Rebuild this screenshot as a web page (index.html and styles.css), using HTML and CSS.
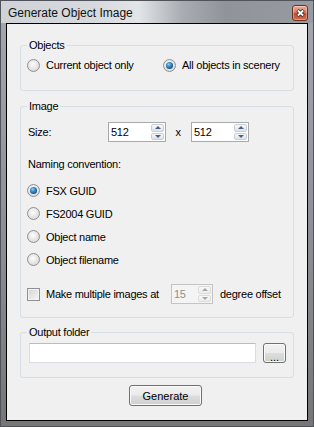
FILE: index.html
```html
<!DOCTYPE html>
<html>
<head>
    <title>Generate Object Image</title>
    <link rel="stylesheet" href="styles.css">
</head>
<body>
    <div class="window">
        <div class="titlebar">
            <span class="title">Generate Object Image</span>
            <span class="close">
                <svg width="9" height="8" viewBox="0 0 9 8">
                    <path d="M1.5 1.2 L7.5 6.8 M7.5 1.2 L1.5 6.8" stroke="#3a2520" stroke-width="3.4"/>
                    <path d="M1.8 1.5 L7.2 6.5 M7.2 1.5 L1.8 6.5" stroke="#fff" stroke-width="1.8"/>
                </svg>
            </span>
        </div>

        <div class="client">
            <fieldset class="group objects">
                <legend>Objects</legend>
                <div class="choice-row">
                    <label class="opt first"><span class="radio"></span>Current object only</label>
                    <label class="opt"><span class="radio on"></span>All objects in scenery</label>
                </div>
            </fieldset>

            <fieldset class="group image">
                <legend>Image</legend>
                <div class="size-row">
                    <span class="size-label">Size:</span>
                    <div class="spin">
                        <span class="val">512</span>
                        <span class="btns"><span class="up"></span><span class="dn"></span></span>
                    </div>
                    <span class="times">x</span>
                    <div class="spin">
                        <span class="val">512</span>
                        <span class="btns"><span class="up"></span><span class="dn"></span></span>
                    </div>
                </div>

                <div class="naming">Naming convention:</div>

                <div class="naming-list">
                    <label class="opt"><span class="radio on"></span>FSX GUID</label>
                    <label class="opt"><span class="radio"></span>FS2004 GUID</label>
                    <label class="opt"><span class="radio"></span>Object name</label>
                    <label class="opt"><span class="radio"></span>Object filename</label>
                </div>

                <div class="multi-row">
                    <span class="check"></span>
                    <span class="multi-text">Make multiple images at</span>
                    <div class="spin small disabled">
                        <span class="val">15</span>
                        <span class="btns"><span class="up"></span><span class="dn"></span></span>
                    </div>
                    <span class="multi-tail">degree offset</span>
                </div>
            </fieldset>

            <fieldset class="group output">
                <legend>Output folder</legend>
                <div class="folder-row">
                    <div class="textbox"></div>
                    <button class="btn browse">...</button>
                </div>
            </fieldset>

            <button class="btn generate">Generate</button>
        </div>
    </div>
</body>
</html>
```

FILE: styles.css
```css
html, body { margin: 0; padding: 0; }
body { font-family: "Liberation Sans", Arial, sans-serif; font-size: 11px; letter-spacing: -0.25px; color: #000; background: #fff; }

.window {
    width: 314px; height: 427px; box-sizing: border-box;
    border: 1px solid #50545a; padding: 0 5px 5px;
    display: flex; flex-direction: column;
    background:
        linear-gradient(90deg, #cfd3d8 0, #d6dade 30%, #e2e5e8 44%, #a9adb3 58%, #8f949a 72%, #979ba1 100%) top / 100% 22px no-repeat,
        linear-gradient(180deg, #a5a9af 0, #8e9298 50%, #767676 100%);
}

/* title bar */
.titlebar { height: 22px; display: flex; justify-content: space-between; align-items: flex-start; flex: none; }
.title { font-size: 12px; letter-spacing: 0; line-height: 20px; padding-top: 2px; margin-left: 2px; color: #111; }
.close {
    width: 16px; height: 16px; box-sizing: border-box; margin-top: 4px;
    border: 1px solid #6a3023; border-radius: 3px;
    background: linear-gradient(180deg, #eab09e 0, #d97a5d 45%, #c44a2c 55%, #d26d4b 100%);
    box-shadow: inset 0 0 0 1px rgba(255,255,255,0.35);
    display: flex; align-items: center; justify-content: center;
}

/* client area */
.client {
    flex: 1; background: #f0f0f0; border: 1px solid #000;
    padding: 15px 13px 0; display: flex; flex-direction: column;
}

.group { margin: 0; border: 1px solid #d5dfe5; border-radius: 3px; padding: 4px 6px 16px; min-width: 0; }
.group legend { padding: 0 2px; line-height: 13px; font-size: 11px; }
.image { margin-top: 9px; padding: 9px 6px 13px; }
.output { margin-top: 8px; padding: 4px 6px 14px; }

.opt { display: flex; align-items: center; white-space: nowrap; }
.choice-row { display: flex; height: 18px; align-items: center; }
.choice-row .first { width: 136px; }

.radio {
    width: 13px; height: 13px; box-sizing: border-box; flex: none; margin-right: 6px;
    border-radius: 50%; border: 1px solid #8e9092;
    background: radial-gradient(circle at 45% 40%, #ffffff 0, #e8e8e8 45%, #cfcfcf 100%);
    display: flex; align-items: center; justify-content: center;
}
.radio.on::after {
    content: ''; width: 7px; height: 7px; border-radius: 50%;
    background: radial-gradient(circle at 40% 35%, #8fd3f7 0, #3a8cc8 35%, #1b4f80 75%, #163d63 100%);
}

/* size row */
.size-row { display: flex; align-items: center; height: 20px; }
.size-label { width: 80px; margin-left: 1px; }
.times { width: 24px; text-align: center; padding-right: 1px; }

.spin {
    display: flex; width: 58px; height: 20px; box-sizing: border-box;
    border: 1px solid #a7a9ad; background: #fff; padding: 1px 1px 1px 0;
}
.spin .val { flex: 1; padding-left: 2px; line-height: 16px; }
.btns { display: flex; flex-direction: column; width: 13px; gap: 1px; }
.btns span {
    flex: 1; box-sizing: border-box; border: 1px solid #c9ced6; border-radius: 2px;
    background: linear-gradient(180deg, #f7f8fa, #dde2e9);
    display: flex; align-items: center; justify-content: center;
}
.btns .up::before { content: ''; border-left: 3px solid transparent; border-right: 3px solid transparent; border-bottom: 3px solid #4b5e7c; }
.btns .dn::before { content: ''; border-left: 3px solid transparent; border-right: 3px solid transparent; border-top: 3px solid #4b5e7c; }

.spin.small { width: 42px; }
.spin.disabled { border-color: #c4c4c4; background: #f4f4f4; color: #8f8f8f; }
.spin.disabled .btns span { border-color: #dcdcdc; background: linear-gradient(180deg, #f8f8f8, #ececec); }
.spin.disabled .btns .up::before { border-bottom-color: #a6a6a6; }
.spin.disabled .btns .dn::before { border-top-color: #a6a6a6; }

.naming { margin-top: 16px; line-height: 13px; margin-left: 1px; }
.naming-list { margin-top: 8px; display: flex; flex-direction: column; }
.naming-list .opt { height: 23px; }

/* multiple images row */
.multi-row { margin-top: 13px; display: flex; align-items: center; height: 20px; }
.check {
    width: 13px; height: 13px; box-sizing: border-box; flex: none; margin-right: 6px;
    border: 1px solid #8e9092;
    background: linear-gradient(135deg, #d4d4d4, #f7f7f7);
    box-shadow: inset 0 0 0 1px #f2f2f2;
}
.multi-text { width: 125px; }
.multi-tail { margin-left: 7px; }

/* output folder */
.folder-row { display: flex; align-items: center; height: 20px; }
.textbox { width: 227px; height: 20px; box-sizing: border-box; margin-left: 2px; background: #fff; border: 1px solid #d9dde3; border-top-color: #b8bcc3; }

.btn {
    font: inherit; color: #000; padding: 0; box-sizing: border-box;
    border: 1px solid #707070; border-radius: 3px;
    background: linear-gradient(180deg, #f2f2f2 0, #ebebeb 48%, #dddddd 52%, #cfcfcf 100%);
    box-shadow: inset 0 0 0 1px #fbfbfb;
}
.browse { width: 23px; height: 20px; margin-left: 7px; line-height: 20px; padding-top: 3px; }
.generate { width: 73px; height: 21px; margin-top: 7px; margin-left: 109px; align-self: flex-start; }
```
